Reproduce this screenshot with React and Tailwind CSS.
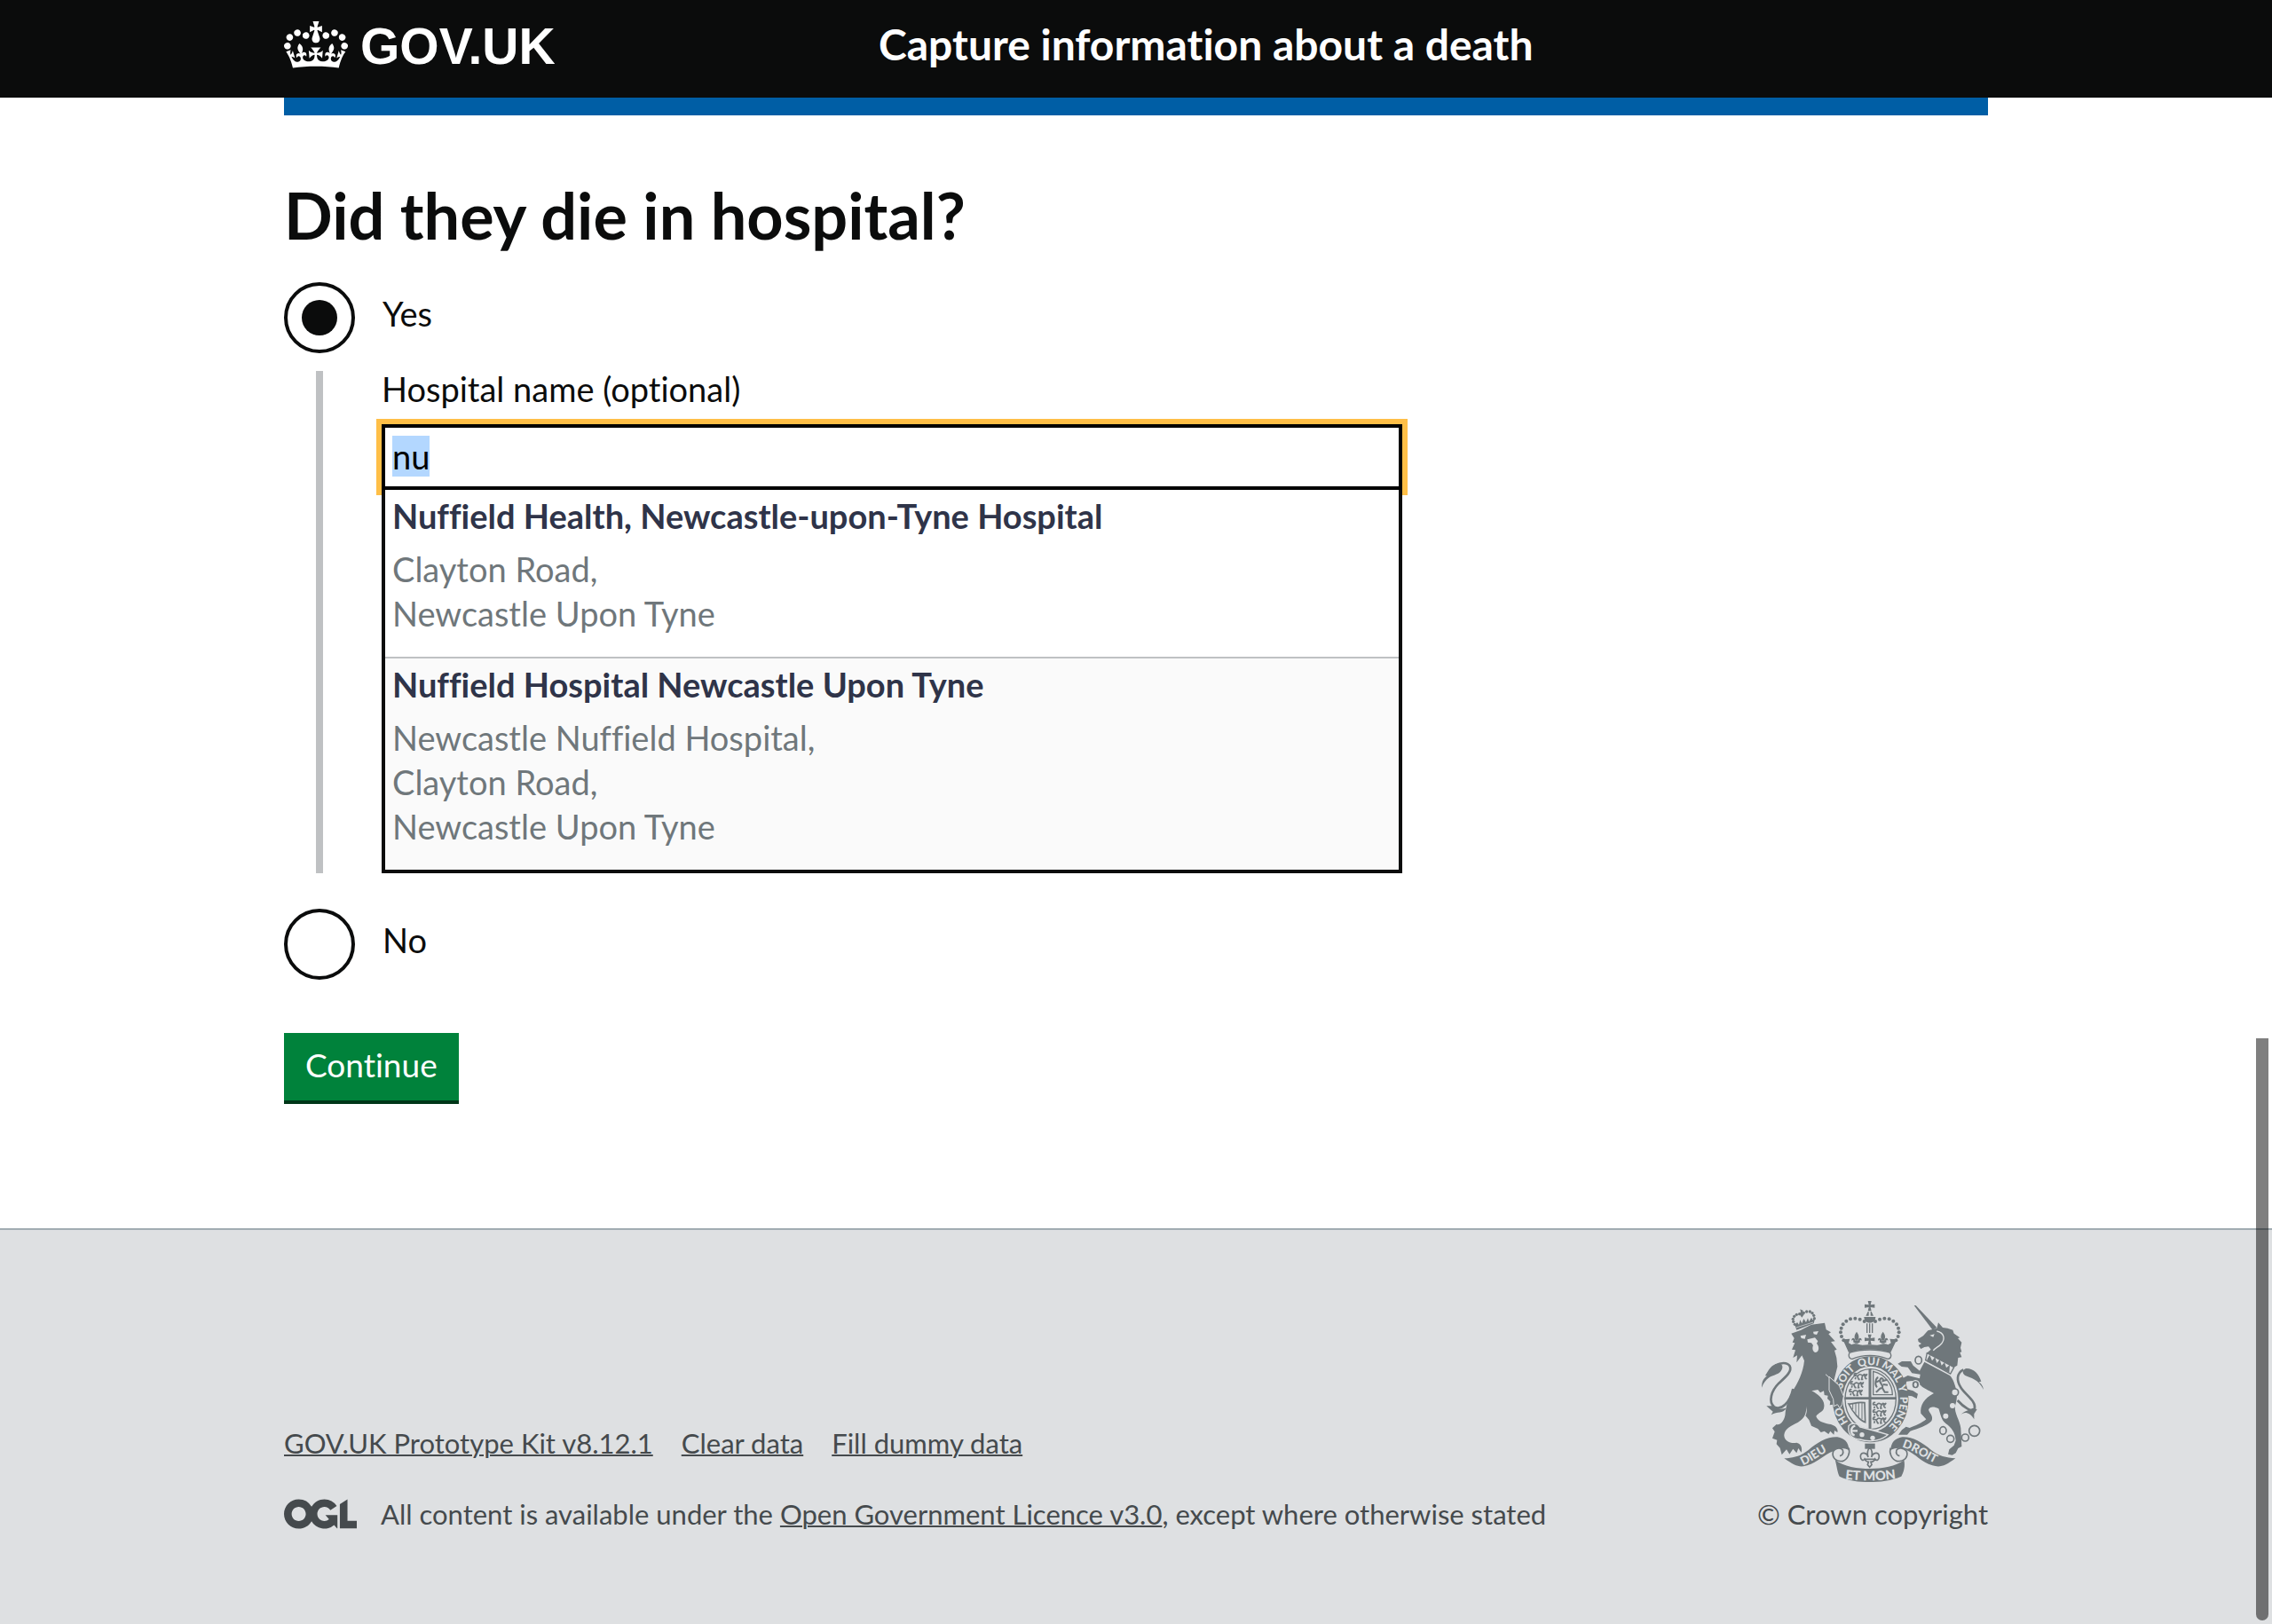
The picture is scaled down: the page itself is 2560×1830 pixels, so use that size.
import { useEffect, useRef } from "react";

const hospitals = [
  {
    name: "Nuffield Health, Newcastle-upon-Tyne Hospital",
    address: ["Clayton Road,", "Newcastle Upon Tyne"],
  },
  {
    name: "Nuffield Hospital Newcastle Upon Tyne",
    address: ["Newcastle Nuffield Hospital,", "Clayton Road,", "Newcastle Upon Tyne"],
  },
];

function Crown() {
  return (
    <svg viewBox="0 0 132 97" className="h-[53px] w-[72px] fill-current" aria-hidden="true">
      <path
        fillRule="evenodd"
        d="M25 30.2c3.5 1.5 7.7-.2 9.1-3.7 1.5-3.6-.2-7.8-3.9-9.2-3.6-1.4-7.6.3-9.1 3.9-1.4 3.5.3 7.5 3.9 9zM9 39.5c3.6 1.5 7.8-.2 9.2-3.7 1.5-3.6-.2-7.8-3.9-9.1-3.6-1.5-7.6.2-9.1 3.8-1.4 3.5.3 7.5 3.8 9zM4.4 57.2c3.5 1.5 7.7-.2 9.1-3.8 1.5-3.6-.2-7.7-3.9-9.1-3.5-1.5-7.6.3-9.1 3.8-1.4 3.5.3 7.6 3.9 9.1zm38.3-21.4c3.5 1.5 7.7-.2 9.1-3.8 1.5-3.6-.2-7.7-3.9-9.1-3.6-1.5-7.6.3-9.1 3.8-1.3 3.6.4 7.7 3.9 9.1zm64.4-5.6c-3.6 1.5-7.8-.2-9.1-3.7-1.5-3.6.2-7.8 3.8-9.2 3.6-1.4 7.7.3 9.2 3.9 1.3 3.5-.4 7.5-3.9 9zm15.9 9.3c-3.6 1.5-7.7-.2-9.1-3.7-1.5-3.6.2-7.8 3.7-9.1 3.6-1.5 7.7.2 9.2 3.8 1.5 3.5-.3 7.5-3.8 9zm4.7 17.7c-3.6 1.5-7.8-.2-9.2-3.8-1.5-3.6.2-7.7 3.9-9.1 3.6-1.5 7.7.3 9.2 3.8 1.3 3.5-.4 7.6-3.9 9.1zM89.3 35.8c-3.6 1.5-7.8-.2-9.2-3.8-1.4-3.6.2-7.7 3.9-9.1 3.6-1.5 7.7.3 9.2 3.8 1.4 3.6-.3 7.7-3.9 9.1zM69.7 17.7l8.9 4.7V9.3l-8.9 2.8c-.2-.3-.5-.6-.9-.9L72.4 0H59.6l3.5 11.2c-.3.3-.6.5-.9.9l-8.8-2.8v13.1l8.8-4.7c.3.3.6.7.9.9l-5 15.4v.1c-.2.8-.4 1.6-.4 2.4 0 4.1 3.1 7.5 7 8.1h.2c.3 0 .7.1 1 .1.4 0 .7 0 1-.1h.2c4-.6 7.1-4.1 7.1-8.1 0-.8-.1-1.7-.4-2.4V34l-5.1-15.4c.4-.2.7-.6 1-.9zM66 92.8c16.9 0 32.8 1.1 47.1 3.2 4-16.9 8.9-26.7 14-33.5l-9.6-3.4c1 4.9 1.1 7.2 0 10.2-1.5-1.4-3-4.3-4.2-8.7L108.6 76c2.8-2 5-3.2 7.5-3.3-4.4 9.4-10 11.9-13.6 11.2-4.3-.8-6.3-4.6-5.6-7.9 1-4.7 5.7-5.9 8-.5 4.3-8.7-3-11.4-7.6-8.8 7.1-7.2 7.9-13.5 2.1-21.1-8 6.1-8.1 12.3-4.5 20.8-4.7-5.4-12.1-2.5-9.5 6.2 3.4-5.2 7.9-2 7.2 3.1-.6 4.3-6.4 7.8-13.5 7.2-10.3-.9-10.9-8-11.2-13.8 2.5-.5 7.1 1.8 11 7.3L80.2 60c-4.1 4.4-8 5.3-12.3 5.4 1.4-4.4 8-11.6 8-11.6H55.5s6.4 7.2 7.9 11.6c-4.2-.1-8-1-12.3-5.4l1.4 16.4c3.9-5.5 8.5-7.7 10.9-7.3-.3 5.8-.9 12.8-11.1 13.8-7.2.6-12.9-2.9-13.5-7.2-.7-5 3.8-8.3 7.1-3.1 2.7-8.7-4.6-11.6-9.4-6.2 3.7-8.5 3.6-14.7-4.6-20.8-5.8 7.6-5 13.9 2.2 21.1-4.7-2.6-11.9.1-7.7 8.8 2.3-5.5 7.1-4.2 8.1.5.7 3.3-1.3 7.1-5.7 7.9-3.5.7-9-1.8-13.5-11.2 2.5.1 4.7 1.3 7.5 3.3l-4.7-15.4c-1.2 4.4-2.7 7.2-4.3 8.7-1.1-3-.9-5.3 0-10.2l-9.5 3.4c5 6.9 9.9 16.7 14 33.5 14.8-2.1 30.8-3.2 47.7-3.2z"
      />
    </svg>
  );
}

function OglLogo() {
  return (
    <svg viewBox="0 0 483.2 195.7" className="h-[34px] w-[82px] shrink-0 fill-current" aria-label="OGL">
      <path d="M421.5 142.8V.1l-50.7 32.3v161.1h112.4v-50.7zm-122.3-9.6A47.12 47.12 0 0 1 221 97.8c0-26 21.1-47.1 47.1-47.1 16.7 0 31.4 8.7 39.7 21.8l42.7-27.2A97.63 97.63 0 0 0 268.1 0c-36.5 0-68.3 20.1-85.1 49.7A98 98 0 0 0 97.8 0C43.9 0 0 43.9 0 97.8s43.9 97.8 97.8 97.8c36.5 0 68.3-20.1 85.1-49.7a97.76 97.76 0 0 0 149.6 25.4l19.4 22.2h3v-87.8h-80l24.3 27.5zM97.8 145c-26 0-47.1-21.1-47.1-47.1s21.1-47.1 47.1-47.1 47.1 21.1 47.1 47.1S123.8 145 97.8 145" />
    </svg>
  );
}

const INK = "#6f777b";
const PAPER = "#dee0e2";

const crownBeads = [
  [419, 117], [404, 110], [388, 107], [372, 109], [358, 116],
  [347, 127], [341, 140], [339, 154], [342, 168], [349, 181],
];

const lionCrownBeads = [
  [200, 92], [190, 94], [182, 100], [178, 109], [179, 118], [184, 127],
  [214, 88], [224, 84], [235, 84], [243, 89], [248, 97], [250, 107],
];

const pattee =
  "M-6 -17H6L3 -4L17 -6V6L3 4L6 17H-6L-3 4L-17 6V-6L-3 -4Z";

function Fleur({ x, y }) {
  return (
    <g transform={`translate(${x} ${y})`} fill={INK}>
      <path d="M0 -22C-9 -10 -9 -2 -3 8H3C9 -2 9 -10 0 -22Z" />
      <path d="M-4 8C-6 -4 -18 -4 -17 8C-12 3 -9 8 -12 13L-4 17H4L12 13C9 8 12 3 17 8C18 -4 6 -4 4 8Z" />
    </g>
  );
}

function PassantLion({ x, y }) {
  return (
    <path
      transform={`translate(${x} ${y})`}
      d="M2 8C6 2 10 12 14 6S22 2 30 6L34 2L40 4M6 12L4 19M12 10L16 19H20M28 8L26 19H31M36 6L38 14L43 18M34 6C40 10 42 6 44 0M2 8C-2 2 4 -4 8 0"
      fill="none"
      stroke={INK}
      strokeWidth="5"
    />
  );
}

function RoyalArms() {
  return (
    <svg viewBox="72 48 750 612" className="h-[204px] w-[250px]" aria-hidden="true">
      <defs>
        <path id="garter-line" d="M440 496A100 116 0 0 1 440 264A100 116 0 0 1 440 496" />
        <path id="dieu-line" d="M211 604C248 590 282 556 330 543" />
        <path id="mon-line" d="M345 649C400 657 475 657 535 647" />
        <path id="droit-line" d="M546 542C590 553 625 585 678 605" />
      </defs>

      {/* lion */}
      <path
        fill="none"
        stroke={INK}
        strokeWidth="8"
        d="M178 345C168 392 138 420 114 406C94 388 104 352 130 326C152 306 176 286 167 268C158 254 136 256 118 266"
      />
      <path fill={INK} d="M72 341C72 320 78 308 90 302L84 300C96 280 104 264 124 260C140 258 146 268 140 280C134 296 112 298 98 306C86 314 78 326 72 341Z" />
      <path fill={INK} d="M88 403L112 403L132 414L156 410C142 430 126 420 104 433L110 422Z" />
      <path
        fill={INK}
        d="M172 158L205 146L240 128L285 122L290 145L306 154L298 160L320 184L306 186L326 212L318 215L325 240L328 270L316 318L338 340L348 372C350 390 346 398 340 400L335 412L328 400L318 408L312 398L302 400L304 388L294 378L296 368L284 366L282 352L270 358L262 348L241 352C262 362 286 382 283 405C282 425 262 425 256 438C262 455 280 460 300 464C318 466 332 478 328 492L318 486L316 500L304 488L298 498L284 488L272 492L262 480L240 470L232 450L220 436C228 420 222 410 222 400C225 430 215 445 195 458C170 470 150 480 148 500C146 520 170 532 190 527C205 530 210 545 206 560L196 546L190 562L178 548L166 566L156 550L140 568L134 545L122 532L124 518L108 512L116 490L108 478L122 465C135 470 152 450 152 425C156 400 160 380 175 355C195 325 212 290 216 250L208 232L190 256L192 232L178 240L186 214L174 212L184 190L176 188L182 174Z"
      />
      <path fill={PAPER} d="M203 166L222 162L218 176L206 174ZM246 152L264 150L258 162L248 160ZM226 178L252 172L262 184L258 192C268 202 266 220 254 222C244 220 242 208 246 198L240 190L228 188Z" />
      <path fill="none" stroke={PAPER} strokeWidth="3" d="M288 296L334 336M328 342L350 376" />
      {lionCrownBeads.map(([x, y]) => (
        <circle key={`${x}-${y}`} cx={x} cy={y} r="5" fill={INK} />
      ))}
      <path fill={INK} d="M202 76L212 80L210 88L216 92L208 104L202 96L196 90L204 86Z" />
      <path fill={INK} d="M184 130L192 120L198 128L202 112L208 124L214 108L222 120L228 106L232 118L240 104L244 112L252 108L248 124L190 146Z" />
      <path fill="none" stroke={PAPER} strokeWidth="2" d="M188 138L246 120" />

      {/* unicorn */}
      <path fill="none" stroke={INK} strokeWidth="8" d="M734 384C752 404 786 430 792 410C796 386 762 366 746 342C730 318 730 292 754 280" />
      <path fill={INK} d="M822 348C820 334 812 326 806 322L814 320C806 296 790 276 764 276C750 280 748 292 760 300C778 308 804 312 822 348Z" />
      <path fill={INK} d="M744 434C756 420 776 424 790 448L790 430L800 414L786 410C770 420 756 418 744 434Z" />
      <path fill={INK} d="M587 63L593 63L664 138L650 146Z" />
      <path
        fill={INK}
        d="M669 121L684 138L700 140L718 146L722 158L742 172L735 174L748 188L744 206L748 220L742 222L748 238L736 240L733 266L722 272L628 226L644 212L636 202L622 204L610 210L602 198L612 192L602 186L600 177L618 166L634 148L664 140Z"
      />
      <path fill="none" stroke={PAPER} strokeWidth="4" d="M664 150C690 156 692 176 680 192C670 204 658 206 652 216" />
      <path fill={PAPER} d="M640 164L656 160L652 170Z" />
      <path fill={PAPER} stroke={INK} strokeWidth="4" d="M631 224L722 272L710 294L626 248Z" />
      <path fill={INK} d="M632 244L640 230L648 250L658 238L664 258L674 246L680 266L690 256L696 274L708 264L706 290L630 252Z" />
      <path
        fill={INK}
        d="M622 254L708 300C718 310 722 322 728 342C735 362 732 382 726 402C722 428 742 450 745 478L748 540L736 546L728 562L716 569L702 566L706 550L722 536L728 520C726 492 714 476 694 462C678 450 676 428 670 412C655 405 640 404 636 416C640 428 654 438 646 454C630 470 600 480 574 488L564 500L534 500L546 484L560 473L572 477C590 470 615 460 628 448L610 428C606 402 622 376 654 360C636 350 616 342 610 334L580 318L562 320L556 336L562 346L584 352L600 362L596 378L580 370L566 368L552 350L542 330L550 308L566 300L606 310L608 296L580 292L566 272L545 270L532 260L546 252L576 252L584 266L606 284Z"
      />
      <g fill={PAPER} stroke={INK} strokeWidth="5">
        <ellipse cx="602" cy="248" rx="11" ry="13" />
        <circle cx="725" cy="357" r="12" />
        <ellipse cx="685" cy="486" rx="11" ry="13" />
        <circle cx="710" cy="514" r="12" />
        <circle cx="760" cy="510" r="12" />
        <circle cx="791" cy="487" r="18" />
      </g>
      <ellipse cx="592" cy="331" rx="13" ry="14" fill={INK} stroke={PAPER} strokeWidth="4" />
      <ellipse cx="592" cy="331" rx="5" ry="8" fill={PAPER} />
      <circle cx="717" cy="402" r="9" fill={PAPER} />
      <circle cx="694" cy="437" r="9" fill={PAPER} />

      {/* crown */}
      <path transform="translate(437 65)" d={pattee} fill={INK} />
      <path fill={INK} d="M424 98L431 84H434V98ZM450 98L443 84H440V98ZM418 102H457C456 116 448 122 437 122C427 122 419 116 418 102Z" />
      <path fill="none" stroke={INK} strokeWidth="4" d="M428 124V156M446 124V156M437 124V156" />
      {crownBeads.map(([x, y]) => (
        <g key={`${x}-${y}`} fill={INK}>
          <circle cx={x} cy={y} r="6" />
          <circle cx={875 - x} cy={y} r="6" />
        </g>
      ))}
      <Fleur x={393} y={174} />
      <Fleur x={482} y={174} />
      <path transform="translate(437 178)" d={pattee} fill={INK} />
      <path fill={INK} d="M346 178L370 176L366 190L376 196C386 190 400 194 404 196C415 200 426 194 437 196C449 194 460 200 471 196C476 194 489 190 499 196L509 190L505 176L529 178L508 222C465 208 410 208 366 222Z" />

      {/* garter */}
      <ellipse cx="440" cy="380" rx="111" ry="128" fill="none" stroke={INK} strokeWidth="35" />
      <ellipse cx="440" cy="380" rx="89" ry="106" fill={PAPER} />
      <ellipse cx="440" cy="380" rx="86" ry="102" fill="none" stroke={INK} strokeWidth="4" />
      <path fill={PAPER} stroke={INK} strokeWidth="4" d="M370 222C364 230 366 244 378 244C415 228 460 228 498 244C510 244 512 230 505 222C465 210 410 210 370 222Z" />
      <g fontFamily="Lato, sans-serif" fontWeight="900" fontSize="36" fill={PAPER} textAnchor="middle">
        <text><textPath href="#garter-line" startOffset="17%">HO</textPath></text>
        <text><textPath href="#garter-line" startOffset="36%">SOIT</textPath></text>
        <text><textPath href="#garter-line" startOffset="49%">QUI</textPath></text>
        <text><textPath href="#garter-line" startOffset="61%">MAL</textPath></text>
        <text><textPath href="#garter-line" startOffset="70%">Y</textPath></text>
        <text><textPath href="#garter-line" startOffset="82%">PENSE</textPath></text>
      </g>
      <path fill="none" stroke={INK} strokeWidth="9" d="M438 278V482" />
      <path fill="none" stroke={INK} strokeWidth="8" d="M352 377H528" />
      <PassantLion x={384} y={294} />
      <PassantLion x={372} y={322} />
      <PassantLion x={368} y={348} />
      <PassantLion x={448} y={392} />
      <PassantLion x={448} y={417} />
      <PassantLion x={448} y={442} />
      <path fill="none" stroke={INK} strokeWidth="4" d="M449 286V365H514C514 330 490 296 449 286Z" />
      <path fill="none" stroke={INK} strokeWidth="6" d="M458 356C470 350 466 342 480 342L488 356H500M480 342C484 330 470 328 472 316L460 322M472 316C474 304 484 310 482 318L496 314M482 330L498 332M462 340C452 330 458 308 466 306" />
      <path fill="none" stroke={INK} strokeWidth="5" d="M366 396C380 398 392 388 420 392L422 458C404 452 380 424 366 396Z" />
      <path fill="none" stroke={INK} strokeWidth="3" d="M380 394V414M390 394V428M400 392V440M411 392V448" />
      <path fill="none" stroke={PAPER} strokeWidth="4" d="M392 462C410 484 440 486 468 484C452 494 440 498 396 490" />
      <path fill={INK} stroke={PAPER} strokeWidth="4" d="M366 470C376 458 396 460 404 474L472 492L498 500C480 518 440 528 404 516C378 514 362 500 366 470Z" />
      <path fill="none" stroke={PAPER} strokeWidth="7" d="M388 470C372 474 370 498 386 502M372 487H396" />
      <circle cx="411" cy="500" r="8" fill={PAPER} />
      <circle cx="447" cy="511" r="8" fill={PAPER} />
      {/* paw resting on the garter */}
      <path fill={INK} stroke={PAPER} strokeWidth="3" d="M300 304L334 334L349 370L344 398L336 410L328 398L316 404L314 380L300 350Z" />

      {/* fleur-de-lis pendant */}
      <path fill={INK} d="M421 530H455V548H421Z" />
      <path fill={PAPER} stroke={INK} strokeWidth="5" d="M437 543C428 554 428 564 432 576C428 560 406 556 406 574C406 586 416 590 420 582C424 590 430 592 433 592L430 602L437 610L444 602L441 592C446 592 452 590 455 582C460 590 469 586 469 574C469 556 448 560 443 576C447 564 447 554 437 543Z" />
      <path stroke={INK} strokeWidth="5" d="M420 583H455" />

      {/* motto ribbon */}
      <path fill="none" stroke={INK} strokeWidth="5" d="M366 545C372 560 364 584 345 590C320 590 308 576 314 556C322 544 340 542 346 552C350 564 344 570 336 572M508 545C502 560 510 584 530 590C556 590 568 576 562 556C552 544 534 542 528 552C524 564 530 570 538 572" />
      <path fill={INK} d="M148 580C180 578 205 572 230 552C262 524 296 506 328 508C352 512 366 526 367 552C350 544 330 542 314 556C284 566 262 594 226 604C200 612 185 606 148 580Z" />
      <path fill={INK} d="M727 580C696 578 670 572 645 552C613 524 579 506 547 508C523 512 509 526 508 552C525 544 545 542 561 552C591 564 613 594 649 604C675 612 692 606 727 580Z" />
      <path fill={INK} d="M320 584C346 608 400 615 437 615C480 615 526 608 553 586C558 606 552 628 544 641C510 656 470 660 437 660C400 660 365 656 335 641C328 628 326 606 320 584Z" />
      <g fontFamily="Lato, sans-serif" fontWeight="900" fontSize="44" fill={PAPER}>
        <text fontSize="40"><textPath href="#dieu-line">DIEU</textPath></text>
        <text textAnchor="middle"><textPath href="#mon-line" startOffset="50%">ET MON</textPath></text>
        <text fontSize="40"><textPath href="#droit-line">DROIT</textPath></text>
      </g>
    </svg>
  );
}

function Radio({ id, label, defaultChecked }) {
  return (
    <div className="flex h-20">
      <input
        type="radio"
        id={id}
        name="died-in-hospital"
        defaultChecked={defaultChecked}
        className="grid size-20 shrink-0 appearance-none place-content-center rounded-full border-4 border-[#0b0c0c] bg-white checked:before:block checked:before:size-10 checked:before:rounded-full checked:before:bg-[#0b0c0c] checked:before:content-['']"
      />
      <label htmlFor={id} className="pt-2.5 pl-[31px] text-[38px] leading-[50px]">
        {label}
      </label>
    </div>
  );
}

export default function App() {
  const field = useRef(null);

  useEffect(() => {
    field.current.focus({ preventScroll: true });
    field.current.select();
  }, []);

  return (
    <div className="relative flex min-h-screen flex-col bg-white font-[Lato,sans-serif] text-[#0b0c0c] [font-variant-ligatures:none]">
      <header className="bg-[#0b0c0c] text-white">
        <div className="mx-auto flex h-[110px] max-w-[1920px] items-center pb-2.5">
          <a href="#home" className="flex w-1/3 items-center gap-[14px]">
            <Crown />
            <span className="pt-1 font-['Liberation_Sans',sans-serif] text-[57px] leading-[60px] font-bold">GOV.UK</span>
          </a>
          <a href="#service" className="pl-[30px] text-[48px] leading-[60px] font-bold">
            Capture information about a death
          </a>
        </div>
      </header>

      <div className="mx-auto w-full max-w-[1920px] border-t-[20px] border-[#005ea5]">
        <main className="pt-[72px] pb-36">
          <form onSubmit={(e) => e.preventDefault()}>
            <fieldset>
              <legend className="text-[72px] leading-20 font-bold">Did they die in hospital?</legend>
              <div className="mt-9">
                <Radio id="died-yes" label="Yes" defaultChecked />
                <div className="mt-5 ml-9 w-[1224px] max-w-full border-l-8 border-[#bfc1c3] pl-[66px]">
                  <label htmlFor="hospital-name" className="block text-[38px] leading-10">
                    Hospital name (optional)
                  </label>
                  <input
                    ref={field}
                    id="hospital-name"
                    type="text"
                    defaultValue="nu"
                    autoComplete="off"
                    className="mt-5 block h-[74px] w-full border-4 border-black bg-white px-2 pb-0.5 text-[38px] leading-[50px] text-black shadow-[0_0_0_6px_#ffbf47] outline-none selection:bg-[#b3d7ff]"
                  />
                  <ul role="listbox" aria-label="Hospitals" className="relative border-4 border-t-0 border-[#0b0c0c] bg-white">
                    {hospitals.map((h) => (
                      <li
                        key={h.name}
                        role="option"
                        aria-selected="false"
                        className="border-b-2 border-[#bfc1c3] px-2 pt-1 pb-6 text-[38px] leading-[50px] last:border-b-0 even:bg-[#fafafa]"
                      >
                        <div className="mb-2.5 font-bold text-[#2f3449]">{h.name}</div>
                        {h.address.map((line) => (
                          <div key={line} className="text-[#6f777b]">{line}</div>
                        ))}
                      </li>
                    ))}
                  </ul>
                </div>
                <div className="mt-10">
                  <Radio id="died-no" label="No" />
                </div>
              </div>
            </fieldset>
            <button
              type="submit"
              className="mt-[60px] h-[76px] bg-[#00823b] px-6 pb-1 text-[37px] leading-10 text-white shadow-[0_4px_0_#003618]"
            >
              Continue
            </button>
          </form>
        </main>
      </div>

      <footer className="grow border-t-2 border-[#a1acb2] bg-[#dee0e2] pt-20 text-[#454a4d]">
        <div className="mx-auto flex max-w-[1920px] items-end justify-between text-[31px] leading-10">
          <div>
            <ul className="flex gap-8">
              {["GOV.UK Prototype Kit v8.12.1", "Clear data", "Fill dummy data"].map((t) => (
                <li key={t}>
                  <a href="#footer" className="underline decoration-2">{t}</a>
                </li>
              ))}
            </ul>
            <div className="mt-10 flex items-center gap-[27px]">
              <OglLogo />
              <span>
                All content is available under the{" "}
                <a href="#licence" className="underline decoration-2">Open Government Licence v3.0</a>, except where otherwise stated
              </span>
            </div>
          </div>
          <a href="#copyright" className="flex flex-col items-center gap-4">
            <RoyalArms />
            <span>© Crown copyright</span>
          </a>
        </div>
      </footer>

      <div className="absolute top-[1170px] right-1 bottom-1 w-[14px] rounded-b-full bg-black/50" />
    </div>
  );
}
